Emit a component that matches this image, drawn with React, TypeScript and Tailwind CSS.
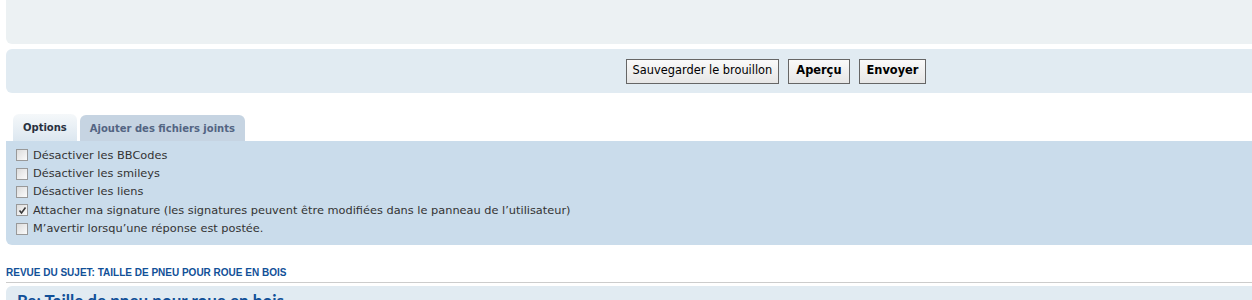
import React from 'react';

const options = [
  { label: 'Désactiver les BBCodes', checked: false },
  { label: 'Désactiver les smileys', checked: false },
  { label: 'Désactiver les liens', checked: false },
  { label: 'Attacher ma signature (les signatures peuvent être modifiées dans le panneau de l’utilisateur)', checked: true },
  { label: 'M’avertir lorsqu’une réponse est postée.', checked: false },
];

const Checkbox = ({ checked }: { checked: boolean }) => (
  <span className="flex h-[12px] w-[12px] shrink-0 items-center justify-center border border-[#999] bg-gradient-to-br from-[#dcdcdc] to-[#fbfbfb]">
    {checked && (
      <svg width="9" height="9" viewBox="0 0 9 9">
        <path d="M1.5 4.5 L3.5 7 L7.5 1.5" fill="none" stroke="#3a3a3a" strokeWidth="1.6" />
      </svg>
    )}
  </span>
);

const Button = ({ children, bold }: { children: React.ReactNode; bold?: boolean }) => (
  <button
    className={`h-[25px] border border-[#666] bg-gradient-to-b from-[#fafafa] to-[#e6e6e6] text-[11.4px] text-black ${bold ? 'px-[7px] font-bold' : 'px-[6px]'}`}
  >
    {children}
  </button>
);

export default function App() {
  return (
    <div className="w-[1252px] h-[300px] overflow-hidden bg-white font-['DejaVu_Sans',Verdana,sans-serif]">
      <div className="w-[1546px] pl-[6px]">
        {/* editor panel end */}
        <div className="h-[44px] rounded-b-[6px] bg-[#ecf1f3]" />

        {/* submit buttons */}
        <div className="mt-[5px] flex h-[44px] items-center justify-center gap-[9px] rounded-[6px] bg-[#e1ebf2]">
          <Button>Sauvegarder le brouillon</Button>
          <Button bold>Aperçu</Button>
          <Button bold>Envoyer</Button>
        </div>

        {/* tabs */}
        <div className="mt-[21px] flex gap-[3px] pl-[7px]">
          <div className="flex h-[27px] items-center rounded-t-[6px] bg-gradient-to-b from-[#f5f8fa] to-[#dce7f0] px-[10px] text-[10px] font-bold text-[#28313f]">
            Options
          </div>
          <div className="mt-[1px] flex h-[26px] items-center rounded-t-[6px] bg-[#c6d4e2] px-[10px] text-[10px] font-bold text-[#536482]">
            Ajouter des fichiers joints
          </div>
        </div>

        {/* options panel */}
        <div className="rounded-b-[6px] bg-[#cadceb] px-[10px] pt-[5px] pb-[7px]">
          {options.map((o) => (
            <div key={o.label} className="flex h-[18.4px] items-center gap-[5px] text-[11.35px] text-[#333]">
              <Checkbox checked={o.checked} />
              <span>{o.label}</span>
            </div>
          ))}
        </div>

        {/* topic review */}
        <h3 className="mt-[21px] border-b border-[#ccc] pb-[3px] font-['Liberation_Sans',Arial,sans-serif] text-[10px] font-bold uppercase leading-[13px] text-[#115098]">
          Revue du sujet: Taille de pneu pour roue en bois
        </h3>
        <div className="mt-[3px] h-[40px] rounded-t-[6px] bg-[#e1ebf2] px-[11px] pt-[2px]">
          <div className="font-['Lato',sans-serif] text-[17px] font-bold text-[#115098]">
            Re: Taille de pneu pour roue en bois
          </div>
        </div>
      </div>
    </div>
  );
}
